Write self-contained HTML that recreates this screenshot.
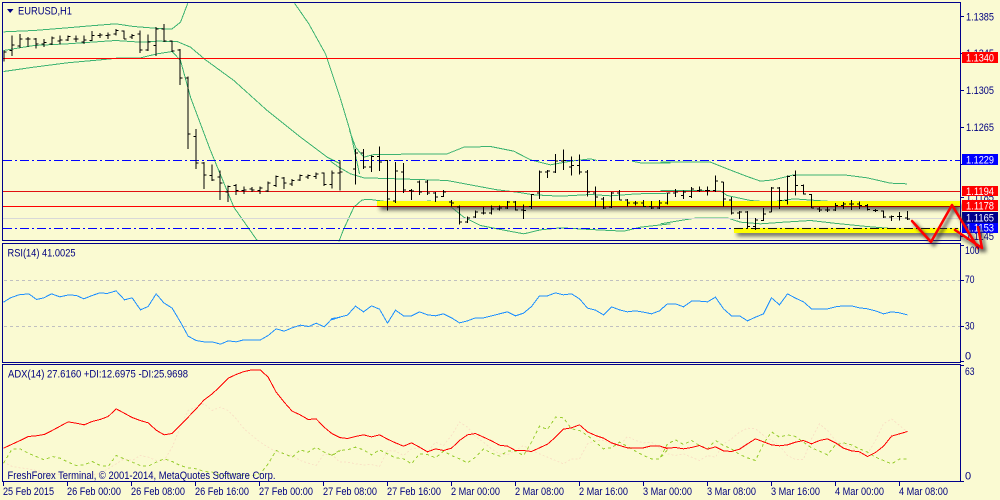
<!DOCTYPE html>
<html><head><meta charset="utf-8"><title>EURUSD,H1</title>
<style>
html,body{margin:0;padding:0;background:#fafad2;width:1000px;height:500px;overflow:hidden}
svg{display:block}
text{font-family:"Liberation Sans",sans-serif;font-size:11px;fill:#000080}
polyline,.nss{vector-effect:non-scaling-stroke;fill:none;shape-rendering:crispEdges}
.b{stroke:#3cb371;stroke-width:1}
.rsi{stroke:#1e90ff;stroke-width:1}
.adx{stroke:#f00;stroke-width:1}
.pdi{stroke:#9acd32;stroke-width:1;stroke-dasharray:3 3}
.mdi{stroke:#f9e2c6;stroke-width:1;stroke-dasharray:2 2}
.bar{stroke:#000;stroke-width:1;fill:none;vector-effect:non-scaling-stroke;shape-rendering:crispEdges}
</style></head><body>
<svg width="1000" height="500" viewBox="0 0 1000 500" xmlns="http://www.w3.org/2000/svg">
<defs>
<filter id="sh" x="-10%" y="-100%" width="120%" height="400%"><feGaussianBlur stdDeviation="2"/></filter>
<filter id="sa" x="-30%" y="-30%" width="160%" height="160%"><feGaussianBlur stdDeviation="1.8"/></filter>
</defs>
<rect width="1000" height="500" fill="#fafad2"/>

<!-- Bollinger -->
<g transform="translate(.5 .5) scale(.33333)">
<polyline class="b" points="9,94 100,90 200,82 270,76 345,70 400,78 450,82 490,85 515,85 540,65 562,8"/>
<polyline class="b" points="882,8 925,70 975,160 1000,235 1020,295"/>
<polyline class="b" points="9,150 100,135 200,130 345,120 420,125 470,122 530,123 570,140 615,178 700,240 800,330 900,410 980,470 1020,490"/>
<polyline class="b" points="9,213 100,200 200,187 300,178 360,172 420,172 470,160 515,153 540,180 570,290 630,450 700,620 770,720"/>
<polyline class="b" points="1020,295 1050,395 1077,520"/>
</g>
<g transform="translate(330.5 130.5) scale(.33333)">
<polyline class="b" points="57,0 75,50 100,80 130,72 350,70 400,50 480,48 550,62 600,88 660,103 720,92 780,85 800,90"/>
<polyline class="b" points="905,92 930,97 1020,97"/>
<polyline class="b" points="0,92 25,110 60,130 100,142 200,145 350,150 430,165 500,178 560,185 610,193 690,197 780,192 840,196 920,190 1020,188"/>
<polyline class="b" points="25,333 40,295 70,230 95,208 120,207 180,215 300,212 350,220 400,260 450,285 510,297 580,310 630,298 690,292 780,297 880,302 930,290 1020,280"/>
</g>
<g transform="translate(660.5 140.5) scale(.33333)">
<polyline class="b" points="0,65 150,65 200,85 260,108 300,122 340,118 400,103 550,103 620,112 690,128 740,130"/>
<polyline class="b" points="0,150 100,150 180,152 200,165 270,180 330,185 400,175 470,180 540,185 620,185 710,197"/>
<polyline class="b" points="0,250 60,240 110,232 200,232 240,245 300,250 370,245 450,240 520,248 620,258 680,263 740,268"/>
</g>

<!-- H lines -->
<g shape-rendering="crispEdges">
<rect x="3" y="218" width="958" height="1" fill="#d8d8d8"/>
<rect x="3" y="58" width="958" height="1" fill="#f00"/>
<rect x="3" y="191" width="958" height="1" fill="#e01010"/>
<rect x="3" y="206" width="958" height="1" fill="#f00"/>
<line x1="3" x2="961" y1="160.5" y2="160.5" stroke="#00f" stroke-dasharray="9 3 2 3"/>
</g>

<!-- Yellow band shadows + bands -->
<rect x="380" y="204" width="582" height="6" fill="#444" opacity=".85" filter="url(#sh)"/>
<rect x="737" y="231" width="222" height="5" fill="#444" opacity=".85" filter="url(#sh)"/>
<rect x="377" y="201" width="584" height="5" fill="#ffff00"/>
<rect x="377" y="206" width="584" height="1" fill="#a00000"/>
<rect x="734" y="228" width="225" height="5" fill="#ffff00"/>
<g shape-rendering="crispEdges">
<line x1="3" x2="734" y1="228.5" y2="228.5" stroke="#00f" stroke-dasharray="9 3 2 3"/>
<line x1="734" x2="958" y1="228.5" y2="228.5" stroke="#111" stroke-dasharray="9 3 2 3"/>
</g>

<!-- Bars -->
<g transform="translate(.5 .5) scale(.33333)">
<path class="bar" d="M10 150V183M10 155h8M34 105V167M27 150h7M34 133h8M58 100V142M51 137h7M58 115h8M82 110V140M75 115h7M82 115h8M106 112V144M99 115h7M106 130h8M130 116V140M123 130h7M130 126h8M154 108V134M147 130h7M154 112h8M178 105V132M171 122h7M178 118h8M202 105V122M195 118h7M202 108h8M226 105V125M219 115h7M226 115h8M250 105V130M243 125h7M250 118h8M274 92V122M267 120h7M274 105h8M298 98V112M291 105h7M298 103h8M322 96V115M315 105h7M322 103h8M346 85V105M339 100h7M346 90h8M370 90V116M363 92h7M370 116h8M394 100V115M387 110h7M394 105h8M418 90V158M411 100h7M418 148h8M442 102V152M435 148h7M442 125h8M466 80V166M459 135h7M466 85h8M490 70V125M483 85h7M490 122h8M514 120V155M507 122h7M514 152h8M538 145V254M531 148h7M538 232h8M562 228V445M555 232h7M562 400h8M586 385V505M579 408h7M586 488h8M610 485V566M603 488h7M610 523h8M634 492V542M627 525h7M634 538h8M658 510V598M651 530h7M658 548h8M682 555V605M675 575h7M682 558h8M706 550V583M699 555h7M706 570h8M730 558V580M723 570h7M730 568h8M754 560V575M747 565h7M754 568h8M778 558V580M771 570h7M778 562h8M802 543V574M795 572h7M802 548h8M826 525V560M819 555h7M826 528h8M850 530V566M843 532h7M850 548h8M874 535V556M867 550h7M874 540h8M898 522V542M891 538h7M898 525h8M922 522V535M915 530h7M922 525h8M946 516V535M939 528h7M946 520h8M970 516V556M963 518h7M970 552h8M994 510V564M987 552h7M994 518h8M1018 480V570M1011 518h7M1018 515h8"/>
</g>
<g transform="translate(330.5 130.5) scale(.33333)">
<path class="bar" d="M75 55V162M68 115h7M75 68h8M99 55V115M92 68h7M99 110h8M123 75V125M116 110h7M123 78h8M147 48V122M140 78h7M147 95h8M171 88V240M164 90h7M171 205h8M195 95V218M188 212h7M195 122h8M219 98V188M212 125h7M219 178h8M243 175V208M236 180h7M243 182h8M267 150V193M260 155h7M267 185h8M291 148V193M284 155h7M291 188h8M315 185V215M308 188h7M315 200h8M339 178V200M332 198h7M339 185h8M363 208V228M356 215h7M363 218h8M387 225V282M380 230h7M387 275h8M411 258V278M404 275h7M411 262h8M435 240V263M428 260h7M435 245h8M459 230V252M452 248h7M459 248h8M483 225V252M476 248h7M483 235h8M507 225V240M500 235h7M507 232h8M531 212V236M524 232h7M531 215h8M555 212V240M548 215h7M555 238h8M579 222V265M572 238h7M579 240h8M603 190V235M596 228h7M603 192h8M627 120V205M620 188h7M627 125h8M651 118V142M644 125h7M651 122h8M675 70V128M668 125h7M675 92h8M699 57V118M692 92h7M699 90h8M723 78V135M716 110h7M723 105h8M747 72V132M740 105h7M747 125h8M771 118V198M764 125h7M771 185h8M795 168V230M788 188h7M795 200h8M819 200V235M812 205h7M819 232h8M843 185V232M836 230h7M843 188h8M867 178V208M860 188h7M867 208h8M891 205V228M884 208h7M891 218h8M915 212V225M908 218h7M915 218h8M939 208V230M932 218h7M939 228h8M963 212V235M956 228h7M963 232h8M987 208V235M980 232h7M987 218h8M1011 188V222M1004 218h7M1011 188h8"/>
</g>
<g transform="translate(660.5 140.5) scale(.33333)">
<path class="bar" d="M45 145V170M38 158h7M45 155h8M69 150V175M62 165h7M69 155h8M93 140V172M86 168h7M93 145h8M117 138V155M110 150h7M117 148h8M141 138V165M134 150h7M141 150h8M165 105V155M158 150h7M165 122h8M189 125V198M182 125h7M189 175h8M213 170V222M206 178h7M213 218h8M237 212V235M230 218h7M237 215h8M261 212V262M254 215h7M261 258h8M285 232V268M278 258h7M285 238h8M309 202V242M302 240h7M309 220h8M333 140V215M326 215h7M333 143h8M357 140V205M350 142h7M357 180h8M381 105V192M374 180h7M381 108h8M405 90V165M398 105h7M405 135h8M429 132V162M422 135h7M429 160h8M453 160V203M446 162h7M453 203h8M477 200V215M470 205h7M477 208h8M501 200V215M494 208h7M501 208h8M525 188V212M518 208h7M525 195h8M549 185V205M542 195h7M549 190h8M573 178V208M566 190h7M573 190h8M597 183V205M590 190h7M597 195h8M621 190V210M614 195h7M621 207h8M645 205V215M638 210h7M645 210h8M669 210V232M662 212h7M669 230h8M693 225V242M686 230h7M693 228h8M717 215V240M710 228h7M717 228h8M741 212V238M734 232h7M741 235h8"/>
</g>

<!-- RSI levels -->
<g shape-rendering="crispEdges" stroke="#c0c0c0" stroke-dasharray="3 3">
<line x1="4" x2="960" y1="280.5" y2="280.5"/>
<line x1="4" x2="960" y1="326.5" y2="326.5"/>
</g>

<!-- RSI -->
<g transform="translate(.5 240.5) scale(.33333)"><polyline class="rsi" points="9,185 30,172 55,163 85,160 108,177 130,172 153,160 178,169 205,163 228,165 250,175 275,165 298,157 320,159 347,151 372,178 395,172 420,208 443,198 467,160 490,187 515,203 540,245 563,287 587,300 610,304 635,304 660,311 683,301 707,304 730,298 780,298 803,285 827,265 851,272 875,262 900,254 925,258 947,248 971,259 995,234 1020,230"/></g>
<g transform="translate(330.5 240.5) scale(.33333)"><polyline class="rsi" points="3,238 27,230 51,224 75,197 99,214 123,196 147,206 171,248 195,209 219,226 243,226 267,214 291,223 315,226 339,220 363,232 387,247 411,241 435,232 459,232 483,226 507,220 531,214 555,226 579,218 603,198 627,166 651,166 675,157 699,163 723,160 747,175 771,203 795,209 819,223 843,199 867,208 891,214 915,211 939,215 963,220 987,211 1011,190"/></g>
<g transform="translate(660.5 240.5) scale(.33333)"><polyline class="rsi" points="0,208 21,190 45,190 69,199 93,182 117,182 141,184 165,170 189,205 213,226 237,226 261,241 285,230 309,220 333,172 357,193 381,160 405,173 429,184 453,205 477,205 501,205 525,199 549,196 573,196 597,202 621,205 645,211 669,220 693,214 717,217 741,223"/></g>

<!-- ADX -->
<g transform="translate(.5 360.5) scale(.33333)">
<polyline class="mdi" points="9,305 35,318 59,322 83,325 107,330 131,335 155,340 179,342 203,345 227,345 251,345 275,342 299,340 323,325 347,310 371,295 395,300 419,285 443,290 467,300 491,300 515,260 539,200 563,150 587,140 611,130 635,150 659,140 683,150 707,175 731,205 755,225 779,245 803,260 827,275 851,280 875,285 899,300 923,308 947,315 971,280 995,285 1020,268"/>
<polyline class="pdi" points="9,308 35,265 59,265 83,278 107,288 131,298 155,288 179,293 203,305 227,315 251,313 275,303 299,315 323,318 347,285 371,295 395,305 419,315 443,317 467,305 491,295 515,303 539,315 563,322 587,325 611,333 635,335 659,345 683,345 707,340 731,345 755,345 779,340 803,310 827,270 851,280 875,290 899,268 923,275 947,260 971,275 995,285 1020,270"/>
<polyline class="adx" points="9,263 35,251 59,240 83,228 107,226 131,222 155,210 179,197 203,184 227,188 251,193 275,183 299,177 323,168 347,145 371,158 395,171 419,180 443,187 467,209 491,223 515,219 539,195 563,170 587,145 611,118 635,100 659,78 683,53 707,42 731,33 755,28 779,28 803,50 827,95 851,125 875,152 899,163 923,177 947,175 971,200 995,220 1020,232"/>
</g>
<g transform="translate(330.5 360.5) scale(.33333)">
<polyline class="mdi" points="3,280 27,305 51,305 75,310 99,313 123,312 147,318 171,270 195,272 219,285 243,265 267,262 291,275 315,245 339,255 363,225 387,185 411,200 435,228 459,245 483,265 507,280 531,283 555,270 579,255 603,270 627,280 651,290 675,300 699,310 723,295 747,295 771,250 795,240 819,240 843,250 867,255 891,228 915,240 939,247 963,245 987,262 1011,270"/>
<polyline class="pdi" points="3,285 27,270 51,268 75,260 99,268 123,283 147,268 171,280 195,292 219,295 243,310 267,280 291,282 315,292 339,272 363,285 387,295 411,307 435,290 459,265 483,278 507,287 531,272 555,272 579,285 603,245 627,197 651,207 675,170 699,172 723,205 747,210 771,225 795,245 819,265 843,262 867,245 891,258 915,272 939,285 963,295 987,295 1011,268"/>
<polyline class="adx" points="3,218 27,231 51,234 75,228 99,223 123,229 147,223 171,236 195,247 219,257 243,247 267,260 291,274 315,265 339,270 363,263 387,240 411,223 435,219 459,230 483,241 507,254 531,257 555,270 579,270 603,273 627,262 651,251 675,230 699,206 723,202 747,193 771,214 795,225 819,233 843,247 867,255 891,262 915,262 939,262 963,256 987,256 1011,265"/>
</g>
<g transform="translate(660.5 360.5) scale(.33333)">
<polyline class="mdi" points="0,270 21,280 45,285 69,280 93,290 117,300 141,285 165,290 189,250 213,235 237,215 261,203 285,205 309,225 333,240 357,255 381,285 405,297 429,297 453,235 477,190 501,210 525,240 549,250 573,260 597,280 621,280 645,240 669,190 693,175 717,195 741,215"/>
<polyline class="pdi" points="0,290 21,250 45,238 69,252 93,240 117,255 141,265 165,240 189,255 213,265 237,282 261,292 285,300 309,250 333,214 357,230 381,223 405,228 429,245 453,262 477,272 501,283 525,253 549,247 573,253 597,265 621,275 645,290 669,300 693,310 717,296 741,295"/>
<polyline class="adx" points="0,258 21,263 45,261 69,265 93,261 117,255 141,266 165,259 189,271 213,273 237,266 261,250 285,235 309,244 333,253 357,256 381,253 405,245 429,240 453,250 477,240 501,235 525,247 549,263 573,271 597,274 621,288 645,276 669,257 693,227 717,220 741,213"/>
</g>

<!-- Frames -->
<g fill="none" stroke="#00008b" stroke-width="1" shape-rendering="crispEdges">
<rect x="2.5" y="2.5" width="958" height="238"/>
<rect x="2.5" y="243.5" width="958" height="119"/>
<rect x="2.5" y="364.5" width="958" height="117"/>
<path d="M961 16.5h3M961 53.5h3M961 90.5h3M961 127.5h3M961 164.5h3M961 197.5h3M961 236.5h3M961 245.5h3M961 280.5h3M961 326.5h3M961 361.5h3M961 365.5h3M961 481.5h3"/>
<path d="M3.5 482v4M67.5 482v4M131.5 482v4M195.5 482v4M259.5 482v4M323.5 482v4M387.5 482v4M451.5 482v4M515.5 482v4M579.5 482v4M643.5 482v4M707.5 482v4M771.5 482v4M835.5 482v4M899.5 482v4"/>
</g>

<!-- Labels -->
<polygon points="7,9 13.5,9 10.2,13" fill="#000080"/>
<text x="18" y="14.5" textLength="54" lengthAdjust="spacingAndGlyphs">EURUSD,H1</text>
<text x="7.5" y="256.5" textLength="68" lengthAdjust="spacingAndGlyphs">RSI(14) 41.0025</text>
<text x="8" y="377.5" textLength="180" lengthAdjust="spacingAndGlyphs">ADX(14) 27.6160 +DI:12.6975 -DI:25.9698</text>
<text x="7.5" y="479" textLength="268" lengthAdjust="spacingAndGlyphs">FreshForex Terminal, © 2001-2014, MetaQuotes Software Corp.</text>

<g>
<text x="966" y="20.5" textLength="28" lengthAdjust="spacingAndGlyphs">1.1385</text>
<text x="966" y="57" textLength="28" lengthAdjust="spacingAndGlyphs">1.1345</text>
<text x="966" y="94" textLength="28" lengthAdjust="spacingAndGlyphs">1.1305</text>
<text x="966" y="131" textLength="28" lengthAdjust="spacingAndGlyphs">1.1265</text>
<text x="966" y="201" textLength="28" lengthAdjust="spacingAndGlyphs">1.1185</text>
<text x="966" y="240" textLength="28" lengthAdjust="spacingAndGlyphs">1.1145</text>
</g>
<g shape-rendering="crispEdges">
<rect x="962" y="52" width="36" height="11" fill="#f00"/>
<rect x="962" y="154" width="36" height="11" fill="#0000ff"/>
<rect x="962" y="186" width="36" height="10" fill="#f00"/>
<rect x="962" y="200" width="36" height="11" fill="#f00"/>
<rect x="962" y="212" width="36" height="11" fill="#00008b"/>
<rect x="962" y="223" width="36" height="10" fill="#0000ff"/>
</g>
<text style="fill:#fff" x="966" y="61.5" textLength="28" lengthAdjust="spacingAndGlyphs">1.1340</text>
<text style="fill:#fff" x="966" y="163.5" textLength="28" lengthAdjust="spacingAndGlyphs">1.1229</text>
<text style="fill:#fff" x="966" y="195" textLength="28" lengthAdjust="spacingAndGlyphs">1.1194</text>
<text style="fill:#fff" x="966" y="209.5" textLength="28" lengthAdjust="spacingAndGlyphs">1.1178</text>
<text style="fill:#fff" x="966" y="221.5" textLength="28" lengthAdjust="spacingAndGlyphs">1.1165</text>
<text style="fill:#fff" x="966" y="231.5" textLength="28" lengthAdjust="spacingAndGlyphs">1.1153</text>

<!-- Hand-drawn arrow over everything -->
<g fill="none" stroke-linejoin="round" stroke-linecap="round">
<path d="M915 224L934 245L955 208L981 251M958 235L985 251L981 230" stroke="#333" stroke-width="3" opacity=".75" filter="url(#sa)"/>
<path d="M912 221L931 242L952 205L978 248M955 230L982 248L978 227" stroke="#f00" stroke-width="2.5"/>
</g>

<text x="965" y="254" textLength="14.5" lengthAdjust="spacingAndGlyphs">100</text>
<text x="965" y="283" textLength="9.5" lengthAdjust="spacingAndGlyphs">70</text>
<text x="965" y="329.5" textLength="9.5" lengthAdjust="spacingAndGlyphs">30</text>
<text x="965" y="359.5">0</text>
<text x="965" y="375" textLength="9.5" lengthAdjust="spacingAndGlyphs">63</text>
<text x="965" y="479.5">0</text>

<g>
<text x="3" y="495" textLength="51" lengthAdjust="spacingAndGlyphs">25 Feb 2015</text>
<text x="67" y="495" textLength="54" lengthAdjust="spacingAndGlyphs">26 Feb 00:00</text>
<text x="131" y="495" textLength="54" lengthAdjust="spacingAndGlyphs">26 Feb 08:00</text>
<text x="195" y="495" textLength="54" lengthAdjust="spacingAndGlyphs">26 Feb 16:00</text>
<text x="259" y="495" textLength="54" lengthAdjust="spacingAndGlyphs">27 Feb 00:00</text>
<text x="323" y="495" textLength="54" lengthAdjust="spacingAndGlyphs">27 Feb 08:00</text>
<text x="387" y="495" textLength="54" lengthAdjust="spacingAndGlyphs">27 Feb 16:00</text>
<text x="451" y="495" textLength="49" lengthAdjust="spacingAndGlyphs">2 Mar 00:00</text>
<text x="515" y="495" textLength="49" lengthAdjust="spacingAndGlyphs">2 Mar 08:00</text>
<text x="579" y="495" textLength="49" lengthAdjust="spacingAndGlyphs">2 Mar 16:00</text>
<text x="643" y="495" textLength="49" lengthAdjust="spacingAndGlyphs">3 Mar 00:00</text>
<text x="707" y="495" textLength="49" lengthAdjust="spacingAndGlyphs">3 Mar 08:00</text>
<text x="771" y="495" textLength="49" lengthAdjust="spacingAndGlyphs">3 Mar 16:00</text>
<text x="835" y="495" textLength="49" lengthAdjust="spacingAndGlyphs">4 Mar 00:00</text>
<text x="899" y="495" textLength="49" lengthAdjust="spacingAndGlyphs">4 Mar 08:00</text>
</g>
</svg>
</body></html>
